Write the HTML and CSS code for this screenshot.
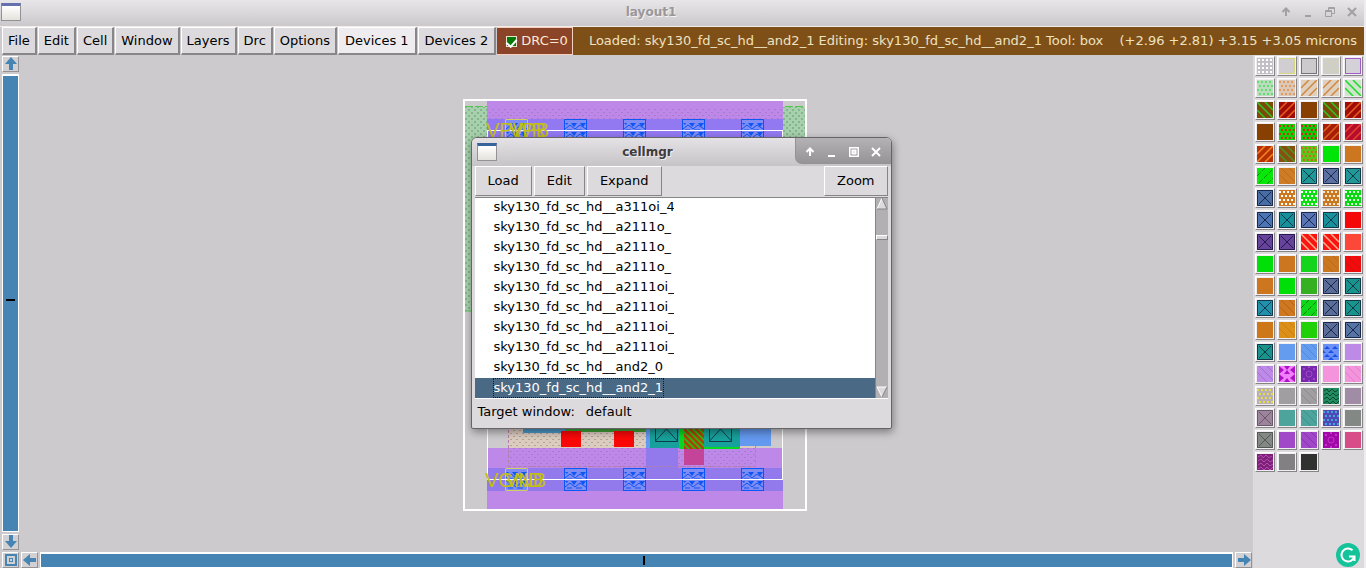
FILE: index.html
```
<!DOCTYPE html>
<html lang="en">
<head>
<meta charset="utf-8">
<title>layout1</title>
<link rel="stylesheet" href="styles.css">
</head>
<body>
<div class="app">
  <header class="titlebar">
    <span class="win-icon"></span>
    <h1 class="title">layout1</h1>
    <div class="win-controls">
      <button aria-label="Shade"><svg width="10" height="10" viewBox="0 0 10 10"><path d="M5 9V2M1.500 5L5 1.500L8.500 5"/></svg></button>
      <button aria-label="Minimize"><svg width="10" height="10" viewBox="0 0 10 10"><path d="M2 9H8"/></svg></button>
      <button aria-label="Restore"><svg width="10" height="10" viewBox="0 0 10 10"><path class="thin" d="M.5 3.500H6.500V9.500H.5ZM.5 4.500H6.500M3.500 3V.5H9.500V6.500H7M3.500 1.500H9.500"/></svg></button>
      <button aria-label="Close"><svg width="10" height="10" viewBox="0 0 10 10"><path d="M1 1L9 9M9 1L1 9"/></svg></button>
    </div>
  </header>

  <nav class="menubar">
    <button class="menu">File</button>
    <button class="menu">Edit</button>
    <button class="menu">Cell</button>
    <button class="menu">Window</button>
    <button class="menu">Layers</button>
    <button class="menu">Drc</button>
    <button class="menu">Options</button>
    <button class="menu devices active">Devices 1</button>
    <button class="menu devices">Devices 2</button>
    <label class="drc"><input type="checkbox" checked><span>DRC=0</span></label>
    <div class="status">
      <span class="status-main">Loaded: sky130_fd_sc_hd__and2_1 Editing: sky130_fd_sc_hd__and2_1 Tool: box</span>
      <span class="status-pos">(+2.96 +2.81) +3.15 +3.05 microns</span>
    </div>
  </nav>

  <main class="workspace">
    <div class="vscroll">
      <button class="arrow" aria-label="Scroll up"><svg width="14" height="14" viewBox="0 0 14 14"><path d="M7 0L13 7H9V13H5V7H1Z"/></svg></button>
      <div class="track"><span class="mark"></span></div>
      <button class="arrow" aria-label="Scroll down"><svg width="14" height="14" viewBox="0 0 14 14"><path d="M7 13L13 6H9V0H5V6H1Z"/></svg></button>
    </div>

    <section class="canvas">
      <svg class="cell" width="344" height="412" viewBox="463 99 344 412">
        <defs>
          <pattern id="dots" width="6" height="6" patternUnits="userSpaceOnUse"><path d="M0 1h2v2H0zM3 4h2v2H3z" fill="#86b48c"/></pattern>
          <pattern id="pdots" width="6" height="6" patternUnits="userSpaceOnUse"><path d="M0 1h2v1H0zM3 4h2v1H3z" fill="#a97bd0"/></pattern>
          <pattern id="tdots" width="6" height="6" patternUnits="userSpaceOnUse"><path d="M0 1h2v1H0zM3 4h2v1H3z" fill="#b4a498"/></pattern>
          <pattern id="stripes" width="6" height="6" patternUnits="userSpaceOnUse"><rect width="6" height="6" fill="#a84808"/><path d="M-1 -1L7 7M-1 5L1 7M5 -1L7 1" stroke="#20c810" stroke-width="1.500"/></pattern>
          <g id="contact">
            <rect x=".5" y=".5" width="22" height="22" fill="#7f8cf4" stroke="#0d55f5"/>
            <path d="M1 4h3l-1 2zM7 4h6l-3 4zM16 4h6l-3 4zM1 13h3l-1 2zM7 13h6l-3 4zM16 13h6l-3 4z" fill="#0d55f5"/>
            <path d="M1 10l5-4 5 4 5-4 6 4M1 19l5-4 5 4 5-4 6 4M3 11h5M12 11h6M3 20h5M12 20h6" fill="none" stroke="#0d55f5"/>
          </g>
        </defs>
        <rect x="465" y="107" width="340" height="204" fill="#a7d0ac"/>
        <rect x="465" y="107" width="340" height="204" fill="url(#dots)"/>
        <path d="M465 106.500H805M465 311H805" stroke="#50c850" stroke-dasharray="8 2"/>
        <rect x="487" y="101" width="296" height="48" fill="#bd88e8"/>
        <rect x="487" y="107" width="296" height="42" fill="url(#pdots)"/>
        <rect x="487" y="119" width="296" height="24" fill="#9279f2"/>
        <rect x="508" y="420" width="248" height="46" fill="#dcccc0"/>
        <rect x="508" y="420" width="248" height="46" fill="url(#tdots)"/>
        <rect x="738" y="420" width="33" height="26" fill="#6499f0"/>
        <rect x="523" y="420" width="42" height="13" fill="#4b98c8"/>
        <rect x="565" y="420" width="81" height="12" fill="#40a038"/>
        <rect x="646" y="420" width="40" height="29" fill="#6499f0"/>
        <rect x="487" y="448" width="296" height="61" fill="#bd88e8"/>
        <rect x="508" y="448" width="248" height="20" fill="url(#pdots)"/>
        <rect x="646" y="448" width="32" height="21" fill="#927aed"/>
        <rect x="487" y="468" width="296" height="23" fill="#927aed"/>
        <rect x="561" y="431" width="20" height="16" fill="#fa0808"/>
        <rect x="614" y="431" width="20" height="16" fill="#fa0808"/>
        <rect x="650" y="420" width="29" height="28" fill="#18a19c"/>
        <rect x="679" y="420" width="61" height="29" fill="#08d820"/>
        <rect x="684" y="420" width="20" height="29" fill="url(#stripes)"/>
        <rect x="704" y="420" width="36" height="27" fill="#18a19c"/>
        <rect x="684" y="449" width="20" height="16" fill="#c44499"/>
        <path d="M655.500 420V441.500H677.500V420M655.500 441L666.500 429L677.500 441M709.500 420V441.500H731.500V420M709.500 441L720.500 429L731.500 441" fill="none" stroke="#103c48"/>
        <path d="M508.500 420V466M755.500 420V466M508 466.500H755" fill="none" stroke="#b080a8" stroke-dasharray="3 2"/>
        <use href="#contact" x="505" y="119"/><use href="#contact" x="564" y="119"/><use href="#contact" x="623" y="119"/><use href="#contact" x="682" y="119"/><use href="#contact" x="741" y="119"/>
        <use href="#contact" x="505" y="468"/><use href="#contact" x="564" y="468"/><use href="#contact" x="623" y="468"/><use href="#contact" x="682" y="468"/><use href="#contact" x="741" y="468"/>
        <path d="M505.500 119.500h22v22h-22zM505.500 468.500h22v22h-22z" fill="none" stroke="#d0cd68"/>
        <rect x="487.500" y="130.500" width="295" height="349" fill="none" stroke="#fff"/>
        <g class="pin"><text x="486" y="137">VPWR</text><text x="509" y="137">VPB</text><text x="485" y="487">VGND</text><text x="505" y="487">VNB</text></g>
        <rect x="464" y="100" width="342" height="410" fill="none" stroke="#fff" stroke-width="2"/>
      </svg>

      <section class="dialog" aria-label="cellmgr">
        <header class="dialog-head">
          <span class="win-icon"></span>
          <h2 class="dialog-title">cellmgr</h2>
          <div class="dialog-controls">
            <button aria-label="Shade"><svg width="10" height="10" viewBox="0 0 10 10"><path d="M5 9V2M1.500 5L5 1.500L8.500 5"/></svg></button>
            <button aria-label="Minimize"><svg width="10" height="10" viewBox="0 0 10 10"><path d="M1 9H8"/></svg></button>
            <button aria-label="Maximize"><svg width="10" height="10" viewBox="0 0 10 10"><path class="thin" d="M.5 .5H9.500V9.500H.5ZM3.500 3.500H6.500V6.500H3.500Z"/></svg></button>
            <button aria-label="Close"><svg width="10" height="10" viewBox="0 0 10 10"><path d="M1 1L9 9M9 1L1 9"/></svg></button>
          </div>
        </header>
        <div class="toolbar">
          <button class="tool">Load</button>
          <button class="tool">Edit</button>
          <button class="tool">Expand</button>
          <button class="tool last">Zoom</button>
        </div>
        <div class="list-area">
          <ul class="list" role="listbox" aria-label="Cells">
            <li role="option"><span>sky130_fd_sc_hd__a311oi_4</span></li>
            <li role="option"><span>sky130_fd_sc_hd__a2111o_</span></li>
            <li role="option"><span>sky130_fd_sc_hd__a2111o_</span></li>
            <li role="option"><span>sky130_fd_sc_hd__a2111o_</span></li>
            <li role="option"><span>sky130_fd_sc_hd__a2111oi_</span></li>
            <li role="option"><span>sky130_fd_sc_hd__a2111oi_</span></li>
            <li role="option"><span>sky130_fd_sc_hd__a2111oi_</span></li>
            <li role="option"><span>sky130_fd_sc_hd__a2111oi_</span></li>
            <li role="option"><span>sky130_fd_sc_hd__and2_0</span></li>
            <li role="option" aria-selected="true" class="selected"><span>sky130_fd_sc_hd__and2_1</span></li>
          </ul>
          <div class="list-scroll">
            <svg width="12" height="12" viewBox="0 0 12 12"><path d="M6 0L11 11H1Z" fill="#dcdadc"/><path d="M1 11L6 0" stroke="#fff"/><path d="M6 0L11 11H1" fill="none" stroke="#868486"/></svg>
            <span class="list-thumb"></span>
            <svg width="12" height="12" viewBox="0 0 12 12"><path d="M1 1H11L6 11Z" fill="#dcdadc"/><path d="M6 11L1 1H11" fill="none" stroke="#fff"/><path d="M11 1L6 11" stroke="#868486"/></svg>
          </div>
        </div>
        <footer class="target"><span>Target window:</span><span>default</span></footer>
      </section>
    </section>

    <div class="hscroll">
      <button class="arrow" aria-label="Zoom to fit"><svg width="14" height="14" viewBox="0 0 14 14"><path fill-rule="evenodd" d="M1 1H13V13H1ZM3 3V11H11V3ZM5 5H9V9H5ZM6 6V8H8V6Z"/></svg></button>
      <button class="arrow" aria-label="Scroll left"><svg width="14" height="14" viewBox="0 0 14 14"><path d="M0 7L7 1V5H13V9H7V13Z"/></svg></button>
      <div class="track"><span class="mark"></span></div>
      <button class="arrow" aria-label="Scroll right"><svg width="14" height="14" viewBox="0 0 14 14"><path d="M14 7L7 1V5H1V9H7V13Z"/></svg></button>
    </div>

    <aside class="side">
      <div class="palette" id="palette"></div>
      <button class="assistant" aria-label="Writing assistant"><svg width="24" height="24" viewBox="0 0 24 24"><circle cx="12" cy="12" r="12" fill="#15c39a"/><path d="M16.500 7.300A6.500 6.500 0 1 0 18.300 13.500M13 13.500H18.500V18" fill="none" stroke="#fff" stroke-width="2"/></svg></button>
    </aside>
  </main>
</div>
<script src="palette.js"></script>
</body>
</html>
```
FILE: styles.css
```
* { box-sizing: border-box; }
body {
  margin: 0;
  background: #eeecee;
  color: #000;
  font: 13px/18px "DejaVu Sans", sans-serif;
}
button { margin: 0; padding: 0; border: 0; background: none; color: inherit; font: inherit; }
svg { display: block; }
.app {
  display: flex;
  flex-direction: column;
  height: 100vh;
  margin-right: 2px;
  background: #cccacc;
}

.titlebar {
  display: flex;
  align-items: center;
  height: 26px;
  flex: none;
  padding: 0 7px 3px 1px;
  background: linear-gradient(#e8e6e8, #cac8ca);
}
.win-icon {
  width: 20px;
  height: 18px;
  border: 1px solid #949294;
  border-top: 3px solid #6670b0;
  background: linear-gradient(#fff, #e4e2dc);
}
.title, .dialog-title {
  flex: 1;
  margin: 0;
  text-align: center;
  font-size: 12px;
  line-height: 18px;
}
.title { color: #999799; text-shadow: 1px 1px #f4f2f4; }
.win-controls { display: flex; gap: 12px; }
.win-controls path, .dialog-controls path { fill: none; stroke: #a2a0a2; stroke-width: 2; }
.win-controls .thin { stroke-width: 1; }

.menubar {
  display: flex;
  gap: 1px;
  height: 29px;
  flex: none;
  padding-left: 2px;
  border-top: 1px solid #f4ece8;
}
.menu {
  padding: 0 5px;
  border: 1px solid;
  border-color: #fff #888688 #888688 #fff;
  border-right-width: 2px;
  border-bottom-width: 2px;
  background: #dcdadc;
  white-space: nowrap;
}
.menu.devices { padding: 0 6px; }
.menu.active { background: #eeecee; }
.drc {
  display: flex;
  align-items: center;
  gap: 4px;
  padding: 0 4px 0 9px;
  border: 1px solid #f4d0c0;
  border-left: 0;
  background: #8c4428;
  color: #fbe8d4;
}
.drc input {
  appearance: none;
  display: grid;
  place-items: center;
  width: 11px;
  height: 11px;
  margin: 0;
  border: 1px solid #e8e0c8;
  background: #087808;
}
.drc input::before {
  content: "";
  width: 5px;
  height: 8px;
  border: solid #fff;
  border-width: 0 2px 2px 0;
  transform: rotate(42deg);
}
.status {
  display: flex;
  flex: 1;
  align-items: center;
  gap: 14px;
  min-width: 0;
  margin-left: -1px;
  padding: 0 7px 0 16px;
  background: #7e5018;
  color: #eee2c0;
  white-space: nowrap;
}
.status-main { flex: 1; min-width: 0; overflow: hidden; }

.workspace {
  display: grid;
  flex: 1;
  grid-template-columns: 20px minmax(0, 1fr) 111px;
  grid-template-rows: minmax(0, 1fr) 16px;
  min-height: 0;
}
.vscroll { display: flex; flex-direction: column; gap: 2px; padding: 1px 1px 2px 2px; }
.hscroll { display: flex; grid-column: 1 / 3; grid-row: 2; gap: 2px; padding: 0 1px 0 2px; }
.track {
  display: flex;
  flex: 1;
  align-items: center;
  justify-content: center;
  border: 1px solid #fff;
  border-width: 2px 1px 1px;
  background: #4684b4;
}
.mark { background: #000; }
.vscroll .track { padding-bottom: 8px; }
.hscroll .track { padding-left: 14px; }
.vscroll .mark { width: 9px; height: 2px; }
.hscroll .mark { width: 2px; height: 9px; }
.arrow {
  display: grid;
  place-items: center;
  width: 17px;
  height: 16px;
  flex: none;
  border: 1px solid;
  border-color: #fff #949294 #949294 #fff;
  background: #d2d0d2;
}
.arrow path { fill: #4684b4; }

.canvas {
  position: relative;
  grid-column: 2;
  grid-row: 1;
  display: flex;
  align-items: center;
  justify-content: center;
  padding: 2px 3px 0 0;
  overflow: hidden;
}
.cell { flex: none; }
.pin { fill: #c2be16; font: 20px "Liberation Sans", sans-serif; }

.dialog {
  position: absolute;
  top: 82px;
  left: calc(50% - 166px);
  width: 421px;
  padding: 0 3px;
  border: 1px solid #666466;
  border-radius: 6px 6px 2px 2px;
  background: #dcdadc;
  box-shadow: 1px 3px 8px rgba(0, 0, 0, .4);
  overflow: hidden;
}
.dialog-head {
  display: flex;
  align-items: center;
  height: 28px;
  margin: 0 -3px;
  padding-left: 5px;
  background: linear-gradient(#e4e2e4, #c6c4c6);
}
.dialog .win-icon { border-top-color: #36649a; }
.dialog-title { padding-left: 4px; color: #3e3c3e; text-shadow: 1px 1px #eeecee; }
.dialog-controls {
  display: flex;
  align-items: center;
  align-self: flex-start;
  gap: 12px;
  height: 26px;
  padding: 2px 10px 0 9px;
  border: 1px solid #949294;
  border-width: 0 0 1px 1px;
  border-radius: 0 0 0 7px;
  background: linear-gradient(#b4b2b4, #969496);
}
.dialog-controls path { stroke: #fff; }
.toolbar { display: flex; gap: 2px; padding-bottom: 1px; }
.tool {
  height: 30px;
  padding: 0 12px;
  border: 1px solid;
  border-color: #fff #868486 #868486 #fff;
}
.tool.last { margin-left: auto; }
.list-area { display: flex; border-top: 1px solid #868486; border-bottom: 1px solid #fff; }
.list { flex: 1; margin: 0; padding: 0; background: #fff; list-style: none; }
.list li { height: 20px; padding-left: 18px; }
.list span {
  display: block;
  max-width: 181px;
  padding: 0 1px;
  border: 1px solid transparent;
  border-width: 0 0 1px;
  overflow: hidden;
  white-space: nowrap;
}
.list .selected { background: #4a6984; color: #fff; }
.selected span { width: fit-content; padding: 0; border: 1px dotted #101820; }
.list-scroll {
  display: flex;
  flex-direction: column;
  width: 13px;
  border-left: 1px solid #868486;
  background: #b2b0b2;
}
.list-thumb { height: 5px; margin: 25px 0 auto; border: 1px solid; border-color: #fff #868486 #868486 #fff; background: #dcdadc; }
.target { display: flex; gap: 11px; padding: 4px 3px 7px; }

.side {
  display: flex;
  flex-direction: column;
  grid-column: 3;
  grid-row: 1 / 3;
  align-items: flex-start;
  justify-content: space-between;
  padding: 1px 0 1px 2px;
  background: #dcdadc;
}
.palette { display: grid; grid-template-columns: repeat(5, 20px); gap: 2px; }
.swatch {
  width: 20px;
  height: 20px;
  padding: 1px;
  border: 1px solid;
  border-color: #fff #868486 #868486 #fff;
  background: #f0eef0;
}
.assistant { align-self: flex-end; margin-right: 4px; }
```
FILE: palette.js
```
// Each layer: [fill, pattern, pattern colour]
const layers = [
  ["#c2c0c6","grid","#fff"],["#d0ced0","frame","#d6d880"],["#cccacc","frame","#747476"],["#d0cec8","fine","#d8d69c"],["#d4d2d8","frame","#a05cc8"],
  ["#bcdcbc","dots","#60dc78"],["#dcc8b8","dots","#e09c60"],["#e0d0c0","slash","#d08840"],["#e0d0c0","slash","#d08840"],["#d0e4cc","back","#18dc28"],
  ["#7c4a08","back","#30c820"],["#a00c08","slash","#e86020"],["#884000",""],["#7c4a08","back","#30c820"],["#a00c08","slash","#e86020"],
  ["#884000",""],["#10d008","dots","#c03c08"],["#10c808","dots","#d02810"],["#a81c08","slash","#d86820"],["#b80c2c","slash","#e04830"],
  ["#b83000","slash","#f08828"],["#885010","back","#489820"],["#58c818","dots","#d06820"],["#00e408",""],["#cc7720",""],
  ["#08e808","dash","#088808"],["#d07c24","fine","#b06828"],["#209898","x","#103848"],["#5c70a4","x","#182848"],["#209898","x","#103848"],
  ["#486ca4","x","#182848"],["#d07820","dots","#fff"],["#08e010","dots","#fff"],["#c87820","dots","#f8e4d0"],["#08d810","dots","#e0ffe0"],
  ["#4c74b4","x","#182848"],["#18909c","x","#103848"],["#5874b4","x","#182848"],["#18909c","x","#103848"],["#f40808",""],
  ["#66449c","x","#24184c"],["#66449c","x","#24184c"],["#fa1410","back","#ffb090"],["#fa1410","back","#ffb090"],["#fc4838",""],
  ["#00e008",""],["#cc7720",""],["#10d818","fine","#38b838"],["#cc7720","fine","#b06c28"],["#f40c0c","fine","#b81818"],
  ["#cc7720",""],["#00e008",""],["#34b020",""],["#5c6c98","x","#182848"],["#18948c","x","#103848"],
  ["#2090ac","x","#103848"],["#d07820","fine","#a86020"],["#10d818","dash","#087808"],["#5c6c98","x","#182848"],["#18948c","x","#103848"],
  ["#cc7718",""],["#dc9018","fine","#c07c18"],["#20d008",""],["#5c6c98","x","#182848"],["#5874a4","x","#182848"],
  ["#18948c","x","#103848"],["#649cf0",""],["#649cf0","fine","#5080d0"],["#6c90f4","tri","#1850ec"],["#bd8ae8",""],
  ["#bd8ae8","fine","#9c68cc"],["#f080fc","bow","#b010c8"],["#7828ac","ring","#a048c8"],["#f494dc",""],["#f494dc","fine","#d878c8"],
  ["#b8b0b8","dots","#e8dc40"],["#a09ea0",""],["#a09ea0","fine","#888488"],["#208c60","weave","#084830"],["#a08ca4",""],
  ["#9c849c","x","#685868"],["#4ca49c",""],["#4ca49c","fine","#388c84"],["#5048b8","dots","#40a8d0"],["#848884",""],
  ["#848884","x","#545854"],["#a048c8",""],["#a048c8","fine","#7c30a8"],["#a008a8","ring","#c830c8"],["#d84c88",""],
  ["#802078","weave","#b050b0"],["#828082",""],["#303230",""]
];

const four = [0, 1, 2, 3];
const marks = {
  grid: c => four.flatMap(r => four.map(k => `<rect x="${1 + k * 4}" y="${1 + r * 4}" width="2" height="2" fill="${c}"/>`)).join(""),
  frame: c => `<rect x=".5" y=".5" width="15" height="15" fill="none" stroke="${c}"/>`,
  dots: c => four.flatMap(r => four.map(k => `<rect x="${k * 4 + (r % 2) * 2}" y="${1 + r * 4}" width="2" height="2" fill="${c}"/>`)).join(""),
  slash: c => `<path d="M0 8L8 0M0 16L16 0M8 16L16 8" stroke="${c}" stroke-width="1.5"/>`,
  back: c => `<path d="M8 0L16 8M0 0L16 16M0 8L8 16" stroke="${c}" stroke-width="1.5"/>`,
  fine: c => `<path d="M10 0L16 6M2 0L16 14M0 6L10 16" stroke="${c}" stroke-width=".8"/>`,
  dash: c => `<path d="M0 8L8 0M2 15L15 2M10 16L16 10" stroke="${c}" stroke-dasharray="5 2"/>`,
  x: c => `<path d="M.5 .5H15.500V15.500H.5ZM2 2L14 14M14 2L2 14" fill="none" stroke="${c}"/>`,
  tri: c => `<path d="M1 5L4 2L7 5ZM9 5L12 2L15 5ZM5 9L8 6L11 9ZM0 9V6L3 9ZM1 13L4 10L7 13ZM9 13L12 10L15 13ZM5 16L8 13L11 16Z" fill="${c}"/>`,
  bow: c => `<path d="M0 0L5 4L0 8ZM16 0L11 4L16 8ZM5 0H11L8 4ZM5 8L8 4L11 8ZM0 8L5 12L0 16ZM16 8L11 12L16 16ZM5 16L8 12L11 16Z" fill="${c}"/>`,
  ring: c => `<circle cx="8" cy="8" r="3" fill="none" stroke="${c}"/><path d="M2 2h2v2H2zM12 2h2v2h-2zM2 12h2v2H2zM12 12h2v2h-2zM7 0h2v2H7zM7 14h2v2H7z" fill="${c}"/>`,
  weave: c => `<path d="M1 3L4 1L6 4L9 1L12 4L15 2M1 7L4 5L7 8L10 5L13 8L16 6M1 11L4 9L7 12L10 9L13 12L16 10M1 15L4 13L7 16L10 13L13 16L16 13" fill="none" stroke="${c}"/>`
};

document.getElementById("palette").innerHTML = layers.map(([fill, mark, colour], i) =>
  `<button class="swatch" aria-label="Layer ${i + 1}"><svg width="16" height="16" viewBox="0 0 16 16"><rect width="16" height="16" fill="${fill}"/>${mark ? marks[mark](colour) : ""}</svg></button>`
).join("");
```
